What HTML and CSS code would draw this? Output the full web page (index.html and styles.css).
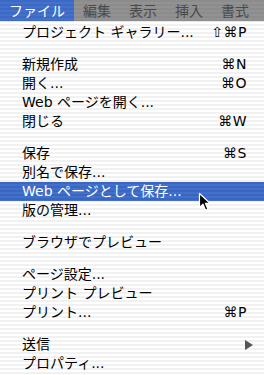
FILE: index.html
```html
<!DOCTYPE html>
<html lang="ja">
<head>
<meta charset="UTF-8">
<meta name="viewport" content="width=device-width, initial-scale=1.0">
<title>ファイル メニュー</title>
<link rel="stylesheet" href="styles.css">
</head>
<body>
    <!-- Menu bar -->
    <div class="menubar">
        <span class="title active">ファイル</span>
        <span class="title">編集</span>
        <span class="title">表示</span>
        <span class="title">挿入</span>
        <span class="title">書式</span>
    </div>

    <!-- File menu -->
    <div class="menu">
        <div class="item"><span class="label">プロジェクト ギャラリー...</span><span class="key">⇧⌘P</span></div>
        <div class="sep"></div>
        <div class="item"><span class="label">新規作成</span><span class="key">⌘N</span></div>
        <div class="item"><span class="label">開く...</span><span class="key">⌘O</span></div>
        <div class="item"><span class="label">Web ページを開く...</span></div>
        <div class="item"><span class="label">閉じる</span><span class="key">⌘W</span></div>
        <div class="sep"></div>
        <div class="item"><span class="label">保存</span><span class="key">⌘S</span></div>
        <div class="item"><span class="label">別名で保存...</span></div>
        <div class="item selected"><span class="label">Web ページとして保存...</span></div>
        <div class="item"><span class="label">版の管理...</span></div>
        <div class="sep"></div>
        <div class="item"><span class="label">ブラウザでプレビュー</span></div>
        <div class="sep"></div>
        <div class="item"><span class="label">ページ設定...</span></div>
        <div class="item"><span class="label">プリント プレビュー</span></div>
        <div class="item"><span class="label">プリント...</span><span class="key">⌘P</span></div>
        <div class="sep"></div>
        <div class="item"><span class="label">送信</span><span class="submenu"></span></div>
        <div class="item"><span class="label">プロパティ...</span></div>
    </div>

    <!-- Mouse pointer -->
    <svg class="cursor" width="14" height="20" viewBox="0 0 14 20">
        <path d="M1.5 1.5 L1.5 15.5 L5 12.2 L7.6 18.2 L10 17.2 L7.4 11.3 L12 11.3 Z" fill="#000" stroke="#fff" stroke-width="1.2" stroke-linejoin="round"/>
    </svg>
</body>
</html>
```

FILE: styles.css
```css
html, body {
    margin: 0;
    padding: 0;
}

body {
    width: 264px;
    height: 375px;
    overflow: hidden;
    position: relative;
    font-family: "DejaVu Sans", "Noto Sans CJK JP", sans-serif;
    background: #fff;
}

/* Menu bar */
.menubar {
    display: flex;
    height: 22px;
    line-height: 21px;
    font-size: 14px;
    color: #4a4a4a;
    background: repeating-linear-gradient(to bottom, #8c8c8c 0 2px, #929292 2px 4px);
    border-bottom: 1px solid #e8e8e8;
    box-sizing: border-box;
}

.title {
    padding: 0 9px;
    font-family: "Noto Sans CJK JP", sans-serif;
}

.title.active {
    color: #fff;
    background: repeating-linear-gradient(to bottom, #3d68c4 0 2px, #4471cc 2px 4px);
}

/* Menu */
.menu {
    position: relative;
    padding: 1px 17px 6px 22px;
    font-size: 14px;
    color: #000;
    background: repeating-linear-gradient(to bottom, #fff 0 2px, #f1f1f1 2px 4px);
    height: 353px;
    box-sizing: border-box;
}

.item {
    position: relative;
    display: flex;
    justify-content: space-between;
    align-items: center;
    height: 19px;
    line-height: 19px;
}

.item.selected {
    color: #fff;
    margin: 0 -17px 0 -22px;
    padding: 0 17px 0 22px;
    background: repeating-linear-gradient(to bottom, #3a66c2 0 2px, #4370ca 2px 4px);
}

.key {
    font-size: 14px;
    letter-spacing: 0.5px;
}

.sep {
    height: 13px;
}

.submenu {
    width: 0;
    height: 0;
    margin-right: -6px;
    border-top: 5px solid transparent;
    border-bottom: 5px solid transparent;
    border-left: 8px solid #555;
}

.cursor {
    position: absolute;
    top: 192px;
    left: 198px;
}
```
